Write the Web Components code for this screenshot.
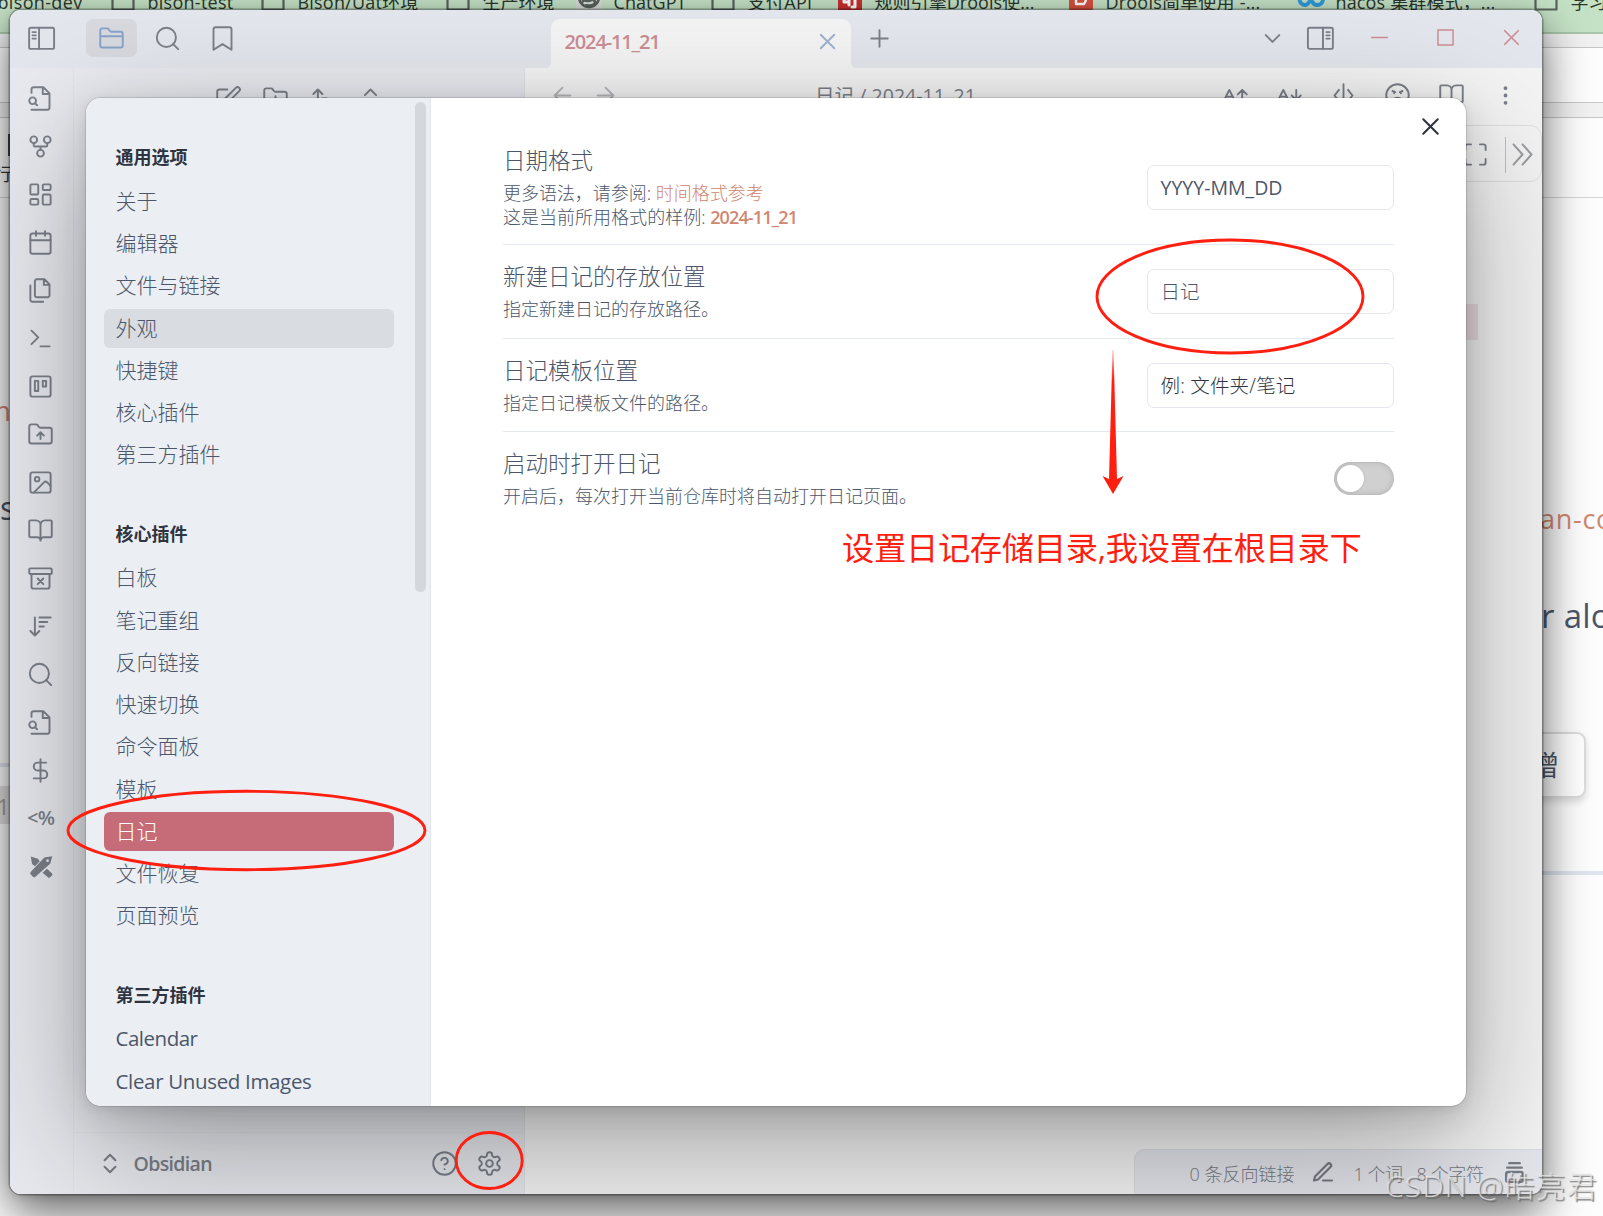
<!DOCTYPE html>
<html lang="zh-CN">
<head>
<meta charset="utf-8">
<title>Obsidian</title>
<style>
  html, body {
    margin: 0;
    width: 1603px;
    height: 1216px;
    overflow: hidden;
    background: #fff;
  }

  body {
    position: relative;
    font-family: "Open Sans", "Noto Sans CJK SC", sans-serif;
    font-size: 19.5px;
    color: #4c566a;
  }
</style>
</head>
<body>
<browser-page></browser-page>
<app-window>
  <settings-modal></settings-modal>
</app-window>
<red-marks></red-marks>

<script>
// icon shapes, drawn in a 24 unit box
const ICONS = {
  panelLeft: '<rect x="1" y="2.4" width="22.2" height="18.8" rx="1.5"/><path d="M9.8 2.4v18.8M4 6.3h3M4 9.2h3M4 12.1h3"/>',
  panelRight: '<rect x=".8" y="2.4" width="22.2" height="18.8" rx="1.5"/><path d="M14.2 2.4v18.8M17.2 6.3h3M17.2 9.2h3M17.2 12.1h3"/>',
  folder: '<path d="M4 20h16a2 2 0 0 0 2-2V8a2 2 0 0 0-2-2h-7.93a2 2 0 0 1-1.66-.9l-.82-1.2A2 2 0 0 0 7.93 3H4a2 2 0 0 0-2 2v13c0 1.1.9 2 2 2ZM2 10h20"/>',
  folderPlus: '<path d="M4 20h16a2 2 0 0 0 2-2V8a2 2 0 0 0-2-2h-7.93a2 2 0 0 1-1.66-.9l-.82-1.2A2 2 0 0 0 7.93 3H4a2 2 0 0 0-2 2v13c0 1.1.9 2 2 2ZM12 10v6M9 13h6"/>',
  folderUp: '<path d="M4 20h16a2 2 0 0 0 2-2V8a2 2 0 0 0-2-2h-7.93a2 2 0 0 1-1.66-.9l-.82-1.2A2 2 0 0 0 7.93 3H4a2 2 0 0 0-2 2v13c0 1.1.9 2 2 2ZM12 10v6M9 13l3-3 3 3"/>',
  search: '<circle cx="11" cy="11" r="8.5"/><path d="m21.500 21.500-4.500-4.500"/>',
  bookmark: '<path d="m20 22-8-5-8 5V4a2 2 0 0 1 2-2h12a2 2 0 0 1 2 2z"/>',
  fileSearch: '<path d="M4 22h14a2 2 0 0 0 2-2V7.5L14.5 2H6a2 2 0 0 0-2 2v3M14 2v6h6M9 18l-1.5-1.5"/><circle cx="5" cy="14" r="3"/>',
  graph: '<circle cx="12" cy="18" r="3"/><circle cx="6" cy="6" r="3"/><circle cx="18" cy="6" r="3"/><path d="M18 9v2c0 .6-.4 1-1 1H7c-.6 0-1-.4-1-1V9M12 12v3"/>',
  dashboard: '<rect x="3" y="3" width="7" height="9" rx="1"/><rect x="14" y="3" width="7" height="5" rx="1"/><rect x="14" y="12" width="7" height="9" rx="1"/><rect x="3" y="16" width="7" height="5" rx="1"/>',
  calendar: '<rect x="3" y="4" width="18" height="18" rx="2"/><path d="M16 2v4M8 2v4M3 10h18"/>',
  files: '<path d="M15.5 2H8.6c-.4 0-.8.2-1.1.5-.3.3-.5.7-.5 1.1v12.8c0 .4.2.8.5 1.1.3.3.7.5 1.1.5h9.8c.4 0 .8-.2 1.1-.5.3-.3.5-.7.5-1.1V6.5L15.5 2zM3 7.6v12.8c0 .4.2.8.5 1.1.3.3.7.5 1.1.5h9.8M15 2v5h5"/>',
  terminal: '<path d="m4 17 6-6-6-6M12 19h8"/>',
  kanban: '<rect x="3" y="3" width="18" height="18" rx="2"/><path d="M7 7h3v9H7zM14 7h3v5h-3z"/>',
  image: '<rect x="3" y="3" width="18" height="18" rx="2"/><circle cx="9" cy="9" r="2"/><path d="m21 15-3.09-3.09a2 2 0 0 0-2.82 0L6 21"/>',
  book: '<path d="M12 7v14M3 18a1 1 0 0 1-1-1V4a1 1 0 0 1 1-1h5a4 4 0 0 1 4 4 4 4 0 0 1 4-4h5a1 1 0 0 1 1 1v13a1 1 0 0 1-1 1h-6a3 3 0 0 0-3 3 3 3 0 0 0-3-3z"/>',
  archive: '<rect x="2" y="3" width="20" height="5" rx="1"/><path d="M4 8v11a2 2 0 0 0 2 2h12a2 2 0 0 0 2-2V8M9.5 17l5-5M9.5 12l5 5"/>',
  sortDown: '<path d="m3 16 4 4 4-4M7 20V4M11 4h10M11 8h7M11 12h4"/>',
  sortUp: '<path d="m3 8 4-4 4 4M7 4v16M11 12h4M11 16h7M11 20h10"/>',
  dollar: '<path d="M12 2v20M17 5H9.5a3.5 3.5 0 0 0 0 7h5a3.5 3.5 0 0 1 0 7H6"/>',
  pens: '<g fill="currentColor" stroke="none"><path fill-rule="evenodd" d="M22.4 2.9 15.4 4 3.3 16.9q-1 1.1 0 2.2l2 2q1.1 1 2.2 0L20.8 9.4zM18.3 5.6a1.2 1.2 0 1 1 0 2.4 1.2 1.2 0 0 1 0-2.4z"/><path d="m3.3 3 6.4 2 1.6 2.4-4.2 4.4-2.6-2.1z"/><path d="m13.8 17.6 3.9-3.6 4.6 4.3q.7.8 0 1.5l-1.9 1.9q-.8.7-1.5 0z"/></g>',
  edit: '<path d="M11 4H4a2 2 0 0 0-2 2v14a2 2 0 0 0 2 2h14a2 2 0 0 0 2-2v-7M18.5 2.5a2.12 2.12 0 0 1 3 3L12 15l-4 1 1-4Z"/>',
  upDown: '<path d="m7 15 5 5 5-5M7 9l5-5 5 5"/>',
  cross: '<path d="M18 6 6 18M6 6l12 12"/>',
  plus: '<path d="M12 4.7v14.6M4.7 12h14.6"/>',
  chevron: '<path d="m6 9 6 6 6-6"/>',
  minus: '<path d="M5 12h14"/>',
  square: '<path d="M5.3 5.3h13.4v13.4H5.3z"/>',
  arrowLeft: '<path d="m12 19-7-7 7-7M19 12H5"/>',
  arrowRight: '<path d="m12 5 7 7-7 7M5 12h14"/>',
  textUp: '<path d="M3.5 13h6M2 16l4.5-9 4.5 9M18 16V7M14 11l4-4 4 4"/>',
  textDown: '<path d="M3.5 13h6M2 16l4.5-9 4.5 9M18 7v9M14 12l4 4 4-4"/>',
  split: '<path d="M12 2v20M8 7l-4 5 4 5M16 7l4 5-4 5"/>',
  angry: '<circle cx="12" cy="12" r="10"/><path d="M7.5 8 10 9M14 9l2.5-1M9 10h.01M15 10h.01M16 16s-1.5-2-4-2-4 2-4 2"/>',
  dots: '<g fill="currentColor" stroke-width="1.4"><circle cx="12" cy="5.5" r="1"/><circle cx="12" cy="12" r="1"/><circle cx="12" cy="18.5" r="1"/></g>',
  maximize: '<path d="M8 3H5a2 2 0 0 0-2 2v3M21 8V5a2 2 0 0 0-2-2h-3M3 16v3a2 2 0 0 0 2 2h3M16 21h3a2 2 0 0 0 2-2v-3"/>',
  doubleRight: '<path d="m4 3 8 9-8 9M12 3l8 9-8 9"/>',
  help: '<circle cx="12" cy="12" r="10"/><path d="M9.09 9a3 3 0 0 1 5.83 1c0 2-3 3-3 3M12 17h.01"/>',
  gear: '<path d="M12.22 2h-.44a2 2 0 0 0-2 2v.18a2 2 0 0 1-1 1.73l-.43.25a2 2 0 0 1-2 0l-.15-.08a2 2 0 0 0-2.73.73l-.22.38a2 2 0 0 0 .73 2.73l.15.1a2 2 0 0 1 1 1.72v.51a2 2 0 0 1-1 1.74l-.15.09a2 2 0 0 0-.73 2.73l.22.38a2 2 0 0 0 2.73.73l.15-.08a2 2 0 0 1 2 0l.43.25a2 2 0 0 1 1 1.73V20a2 2 0 0 0 2 2h.44a2 2 0 0 0 2-2v-.18a2 2 0 0 1 1-1.73l.43-.25a2 2 0 0 1 2 0l.15.08a2 2 0 0 0 2.73-.73l.22-.39a2 2 0 0 0-.73-2.73l-.15-.08a2 2 0 0 1-1-1.74v-.5a2 2 0 0 1 1-1.74l.15-.09a2 2 0 0 0 .73-2.73l-.22-.38a2 2 0 0 0-2.73-.73l-.15.08a2 2 0 0 1-2 0l-.43-.25a2 2 0 0 1-1-1.73V4a2 2 0 0 0-2-2z"/><circle cx="12" cy="12" r="3"/>',
  pencil: '<path d="M12 20h9M16.5 3.5a2.12 2.12 0 0 1 3 3L7 19l-4 1 1-4Z"/>',
  stack: '<path d="M7 3h10M5 7.3h14"/><rect x="4" y="11.5" width="16" height="9.5" rx="2"/>',
  bookmarkFolder: '<path d="M1.5-2h21v22.500h-21z"/>',
  chat: '<path d="M-1-2h26v24H-1z" fill="#d9ddd9" stroke="none"/><circle cx="12" cy="8" r="10" stroke-width="2.600"/><path d="M5 4q9-2 12 6t-8 6M19 4q-2 9-10 8t-4-9M5 14q4-9 14-1"/>',
  redSite: '<path d="M0-2h24v26H0z" fill="#c9302f" stroke="none"/><path d="M6 0v13h5M11 0v16M17 0v18h-3" stroke="#fff" stroke-width="3"/>',
  redBook: '<rect y="-4" width="24" height="26" rx="3" fill="#d8503f" stroke="none"/><path d="M7-1h8q3 4-1 7 5 4 1 9H7zM7 6h7" stroke="#fff" stroke-width="2.4"/>',
  nacos: '<path d="M13 8q-3-4-6.500-4a6 6 0 1 0 0 12C11 16 13 4 18 4a6 6 0 0 1 0 12q-3 0-4.500-3" stroke="#2f9bdc" stroke-width="4"/>'
};

// shadow root shared by all elements
class BaseElement extends HTMLElement {
  constructor() {
    super();
    this.root = this.attachShadow({ mode: 'open' });
  }

  connectedCallback() {
    this.root.innerHTML = `<style>${this.constructor.styles}</style>${this.render()}`;
  }
}

class UiIcon extends BaseElement {
  static styles = `
    :host {
      display: block;
      flex: none;
      width: 27px;
      height: 27px;
    }

    svg {
      display: block;
      width: 100%;
      height: 100%;
      overflow: visible;
      fill: none;
      stroke: currentColor;
      stroke-width: var(--stroke, 1.7);
      stroke-linecap: round;
      stroke-linejoin: round;
    }
  `;

  render() {
    return `<svg viewBox="0 0 24 24">${ICONS[this.getAttribute('name')]}</svg>`;
  }
}

// one line of text, tracked so that it fills the given width
class TextRun extends BaseElement {
  static styles = `
    :host {
      display: inline-block;
      flex: none;
      white-space: nowrap;
    }

    span {
      display: inline-block;
    }
  `;

  render() {
    return '<span><slot></slot></span>';
  }

  connectedCallback() {
    super.connectedCallback();
    const width = Number(this.getAttribute('width'));
    if (!width) return;
    const span = this.root.querySelector('span');
    const natural = span.getBoundingClientRect().width;
    const count = [...this.textContent].length;
    this.style.letterSpacing = `${(width - natural) / count}px`;
  }
}

class BookmarkItem extends BaseElement {
  static styles = `
    :host {
      display: flex;
      flex: none;
      gap: 13px;
      height: 32px;
      color: #2b352d;
      font-size: 18px;
      line-height: 24px;
    }

    text-run {
      margin: -10px 0 0 -.5px;
    }

    ui-icon {
      width: 24px;
      height: 24px;
      margin-top: -11px;
      color: #59625b;
      --stroke: 2.2;
    }
  `;

  render() {
    const icon = this.getAttribute('icon');
    const width = this.getAttribute('text-width');
    return `${icon ? `<ui-icon name="${icon}"></ui-icon>` : ''}<text-run width="${width}">${this.textContent}</text-run>`;
  }
}

// the browser behind the window
class BrowserPage extends BaseElement {
  static styles = `
    :host {
      display: flex;
      flex-direction: column;
      position: absolute;
      inset: 0;
      overflow: hidden;
      background: #fdfdfd;
    }

    .bookmarks {
      display: flex;
      height: 32px;
      overflow: hidden;
      background: #c5e2c6;
    }

    .strip {
      flex: none;
      box-sizing: border-box;
      border-top: 1px solid #c6c6c6;
    }

    .strip.first {
      height: 15px;
      background: #f1f1f1;
      border-top: 2px solid #a9c5ab;
    }

    .strip.address {
      height: 55px;
    }

    .strip.gap {
      height: 15px;
      background: #f1f1f1;
    }

    .strip.tools {
      height: 81px;
      border-bottom: 1px solid #d4d4d4;
    }

    .scrap {
      position: absolute;
      white-space: nowrap;
    }

    .rule {
      height: 4px;
      background: #dfe4ee;
    }

    .card {
      box-sizing: border-box;
      width: 60px;
      height: 66px;
      border: 2px solid #dcdcdc;
      border-radius: 9px;
      background: #fff;
      box-shadow: 0 4px 7px #0002;
    }
  `;

  static bookmarks = [
    ['', 'bison-dev', 85, 113],
    ['bookmarkFolder', 'bison-test', 86, 150],
    ['bookmarkFolder', 'Bison/Uat环境', 121, 185],
    ['bookmarkFolder', '生产环境', 72, 131],
    ['chat', 'ChatGPT', 73, 134],
    ['bookmarkFolder', '支付API', 65, 127],
    ['redSite', '规则引擎Drools使...', 160, 231],
    ['redBook', 'Drools简单使用 -...', 155, 230],
    ['nacos', 'nacos 集群模式，...', 160, 235],
    ['bookmarkFolder', '学习', 36, 80]
  ];

  render() {
    const bookmarks = BrowserPage.bookmarks.map(([icon, label, textWidth, width]) =>
      `<bookmark-item icon="${icon}" text-width="${textWidth}" style="width:${width}px">${label}</bookmark-item>`).join('');
    return `
      <div class="bookmarks" style="margin-left:-2px">${bookmarks}</div>
      <div class="strip first"></div>
      <div class="strip address"></div>
      <div class="strip gap"></div>
      <div class="strip tools"></div>
      <div class="scrap" style="left:8px;top:134px;width:8px;height:22px;background:#4c4c58"></div>
      <div class="scrap" style="left:-6px;top:161px;font-size:18px;line-height:27px;color:#333">行</div>
      <div class="scrap" style="left:-15px;top:391px;font-size:28px;line-height:38px;color:#d08770">m</div>
      <div class="scrap" style="left:0;top:487px;font-size:32px;line-height:42px">s</div>
      <div class="scrap rule" style="left:0;top:763px;width:12px"></div>
      <div class="scrap" style="left:0;top:786px;width:12px;height:38px;background:#e2dfe0"></div>
      <div class="scrap" style="left:-3px;top:790px;font-size:22px;line-height:32px;color:#a39c9c">1</div>
      <div class="scrap" style="left:1540px;top:497px;font-size:27px;line-height:44px;color:#d08770"><text-run width="73">an-co</text-run></div>
      <div class="scrap" style="left:1541px;top:594px;font-size:33px;line-height:44px"><text-run width="70">r alo</text-run></div>
      <div class="scrap card" style="left:1526px;top:732px"></div>
      <div class="scrap" style="left:1531px;top:745px;font-size:28px;line-height:40px">增</div>
      <div class="scrap rule" style="left:1530px;top:871px;width:80px"></div>
    `;
  }
}

class AppWindow extends BaseElement {
  static styles = `
    :host {
      display: flex;
      flex-direction: column;
      position: absolute;
      left: 10px;
      top: 10px;
      width: 1532px;
      height: 1184px;
      border-radius: 11px;
      color: #7a7f89;
      box-shadow: 0 0 0 1.5px #00000048, 0 17px 46px #000000a0, 0 2px 8px #0002;
    }

    .frame {
      display: flex;
      flex-direction: column;
      flex: 1;
      position: relative;
      overflow: hidden;
      border-radius: 11px;
      background: #f4f4f4;
    }

    .titlebar {
      display: flex;
      align-items: center;
      flex: none;
      box-sizing: border-box;
      height: 58px;
      padding-bottom: 1.500px;
      background: #e3e6ec;
    }

    .active-button {
      display: flex;
      align-items: center;
      justify-content: center;
      width: 51px;
      height: 38px;
      margin: 0 16.5px 0 31px;
      border-radius: 7px;
      background: #d7d9de;
      color: #87a3c8;
    }

    .tab {
      display: flex;
      align-items: center;
      justify-content: space-between;
      align-self: flex-end;
      position: relative;
      box-sizing: border-box;
      width: 300px;
      height: 49px;
      margin: 0 14.5px -1.500px 315.5px;
      padding: 0 10px 4px 13.500px;
      border-radius: 9px 9px 0 0;
      background: #f4f4f4;
      color: #cb8d94;
      font-size: 20px;
      font-weight: 600;
    }

    .tab::before,
    .tab::after {
      content: '';
      position: absolute;
      bottom: 0;
      width: 6px;
      height: 6px;
    }

    .tab::before {
      right: 100%;
      background: radial-gradient(circle at 0 0, transparent 6px, #f4f4f4 6.5px);
    }

    .tab::after {
      left: 100%;
      background: radial-gradient(circle at 100% 0, transparent 6px, #f4f4f4 6.5px);
    }

    .body {
      display: flex;
      flex: 1;
    }

    .ribbon {
      display: flex;
      flex-direction: column;
      gap: 21px;
      box-sizing: border-box;
      width: 64px;
      padding: 17px 0 0 17px;
      border-right: 1px solid #e2e4e8;
      background: #e8eaef;
    }

    .code-mark {
      width: 27px;
      height: 27px;
      font-size: 20px;
      font-weight: 600;
      line-height: 26px;
    }

    .sidebar {
      display: flex;
      flex-direction: column;
      justify-content: space-between;
      width: 450px;
      background: #e8eaef;
    }

    .sidebar-tools {
      display: flex;
      padding: 17px 0 0 140.500px;
      gap: 20.500px;
    }

    .vault {
      display: flex;
      align-items: center;
      box-sizing: border-box;
      height: 62px;
      padding: 0 21px 0 22.500px;
      border-top: 1px solid #e2e4e8;
    }

    .main {
      display: flex;
      flex-direction: column;
      flex: 1;
      border-left: 1px solid #e0e1e4;
    }

    .view-header {
      display: flex;
      align-items: center;
      box-sizing: border-box;
      height: 57px;
      padding: 0 23.5px 2px 23.5px;
    }

    .view-header .title {
      margin: -2px auto 0 196.500px;
    }

    .tools {
      display: flex;
      gap: 27px;
    }

    .editor-toolbar {
      display: flex;
      align-items: center;
      justify-content: flex-end;
      box-sizing: border-box;
      height: 57px;
      border: 1px solid #dddfe3;
      border-radius: 12px;
      padding: 2px 5px 0 0;
    }

    .editor-toolbar i {
      width: 1px;
      height: 36px;
      margin: 0 3.500px 0 15.500px;
      background: #bfc0c2;
    }

    .highlight {
      align-self: flex-end;
      width: 80px;
      height: 36px;
      margin: 122px 64px 0 0;
      background: #e6dee0;
    }

    .status {
      display: flex;
      align-items: center;
      align-self: flex-end;
      box-sizing: border-box;
      width: 408px;
      height: 45px;
      margin-top: auto;
      padding: 1px 14px 0 54.500px;
      border: solid #dcdde1;
      border-width: 1px 0 0 1px;
      border-radius: 11px 0 0 0;
      background: #e5e6ec;
      color: #777b84;
      font-size: 18px;
      font-weight: 300;
    }
  `;

  static ribbon = ['fileSearch', 'graph', 'dashboard', 'calendar', 'files', 'terminal', 'kanban', 'folderUp', 'image',
    'book', 'archive', 'sortDown', 'search', 'fileSearch', 'dollar', '', 'pens'];

  render() {
    const ribbon = AppWindow.ribbon.map(name => name
      ? `<ui-icon name="${name}"></ui-icon>`
      : '<div class="code-mark"><text-run width="27.5">&lt;%</text-run></div>').join('');
    return `
      <div class="frame">
        <div class="titlebar">
          <ui-icon name="panelLeft" style="margin-left:18px"></ui-icon>
          <div class="active-button"><ui-icon name="folder"></ui-icon></div>
          <ui-icon name="search"></ui-icon>
          <ui-icon name="bookmark" style="margin-left:28px"></ui-icon>
          <div class="tab">
            <text-run width="95">2024-11_21</text-run>
            <ui-icon name="cross" style="color:#9db2cb"></ui-icon>
          </div>
          <ui-icon name="plus"></ui-icon>
          <ui-icon name="chevron" style="margin-left:auto"></ui-icon>
          <ui-icon name="panelRight" style="margin-left:21px"></ui-icon>
          <ui-icon name="minus" style="margin-left:31.5px;margin-top:-1px;color:#cd8d92;--stroke:1.3"></ui-icon>
          <ui-icon name="square" style="margin-left:39px;margin-top:-2px;color:#cd8d92;--stroke:1.3"></ui-icon>
          <ui-icon name="cross" style="margin:-2px 17.5px 0 39px;color:#cd8d92;--stroke:1.5"></ui-icon>
        </div>
        <div class="body">
          <div class="ribbon">${ribbon}</div>
          <div class="sidebar">
            <div class="sidebar-tools">
              <ui-icon name="edit"></ui-icon>
              <ui-icon name="folderPlus"></ui-icon>
              <ui-icon name="sortUp"></ui-icon>
              <ui-icon name="upDown"></ui-icon>
            </div>
            <div class="vault">
              <ui-icon name="upDown" style="--stroke:1.9;width:26px"></ui-icon>
              <text-run width="78.5" style="margin-left:11px;margin-right:auto;font-weight:600">Obsidian</text-run>
              <ui-icon name="help"></ui-icon>
              <ui-icon name="gear" style="margin-left:18.5px"></ui-icon>
            </div>
          </div>
          <div class="main">
            <div class="view-header">
              <ui-icon name="arrowLeft" style="color:#b5b6ba"></ui-icon>
              <ui-icon name="arrowRight" style="margin-left:16px;color:#b5b6ba"></ui-icon>
              <text-run class="title" width="161">日记 / 2024-11_21</text-run>
              <div class="tools">
                <ui-icon name="textUp"></ui-icon>
                <ui-icon name="textDown"></ui-icon>
                <ui-icon name="split"></ui-icon>
                <ui-icon name="angry"></ui-icon>
                <ui-icon name="book"></ui-icon>
                <ui-icon name="dots"></ui-icon>
              </div>
            </div>
            <div class="editor-toolbar">
              <ui-icon name="maximize"></ui-icon>
              <i></i>
              <ui-icon name="doubleRight" style="color:#999b9f"></ui-icon>
            </div>
            <div class="highlight"></div>
            <div class="status">
              <text-run width="105">0 条反向链接</text-run>
              <ui-icon name="pencil" style="margin-left:16px;width:24px;--stroke:2.2"></ui-icon>
              <text-run width="49" style="margin-left:19px">1 个词</text-run>
              <text-run width="67" style="margin-left:14px">8 个字符</text-run>
              <ui-icon name="stack" style="margin-left:18px;width:25px;height:25px;--stroke:2.3"></ui-icon>
            </div>
          </div>
        </div>
        <slot></slot>
      </div>
    `;
  }
}

class NavSection extends BaseElement {
  static styles = `
    :host {
      display: flex;
      flex-direction: column;
      gap: 3px;
      margin-bottom: 45.9px;
    }

    h3 {
      margin: 0 0 7.9px 11.500px;
      color: #2e3440;
      font-size: 18px;
      font-weight: 600;
      line-height: 27px;
    }

    .item {
      height: 39.25px;
      padding-left: 11.500px;
      border-radius: 6px;
      font-size: 21px;
      font-weight: 300;
      line-height: 39px;
    }

    .item.latin {
      font-weight: 400;
      font-size: 20.500px;
      line-height: 38px;
    }

    .item.hover {
      background: #d9dce1;
    }

    .item.active {
      background: #c56c78;
      color: #fff;
    }
  `;

  render() {
    const items = this.getAttribute('items').split(',').map(item => {
      const [label, state = '', width = ''] = item.split(':');
      return `<div class="item ${state}"><text-run width="${width}">${label}</text-run></div>`;
    }).join('');
    return `<h3><slot></slot></h3>${items}`;
  }
}

class SettingRow extends BaseElement {
  static styles = `
    :host {
      display: flex;
      align-items: center;
      justify-content: space-between;
      padding: 17px 0 16.500px;
      border-bottom: 1px solid #e4e8f0;
    }

    :host([first]) {
      padding-top: 0;
      padding-bottom: 15.700px;
    }

    :host([last]) {
      border-bottom: 0;
    }

    .name {
      margin-bottom: 5px;
      font-size: 22.5px;
      font-weight: 300;
      line-height: 30px;
    }

    :host([first]) .name {
      margin-bottom: 4.500px;
    }

    .desc {
      font-size: 18px;
      font-weight: 300;
      line-height: 24px;
    }

    /* runs must not push the line box past its height */
    ::slotted(text-run) {
      height: 24px;
      vertical-align: top;
    }
  `;

  render() {
    return `
      <div>
        <div class="name">${this.getAttribute('name')}</div>
        <div class="desc"><slot></slot></div>
      </div>
      <slot name="control"></slot>
    `;
  }
}

class TextField extends BaseElement {
  static styles = `
    :host {
      display: block;
      box-sizing: border-box;
      width: 247px;
      height: 45px;
      padding-left: 12.500px;
      border: 1px solid #e4e7f0;
      border-radius: 7px;
      font-size: 19.5px;
      font-weight: 300;
      line-height: 43px;
    }
  `;

  render() {
    return '<slot></slot>';
  }
}

class ToggleSwitch extends BaseElement {
  static styles = `
    :host {
      display: block;
      box-sizing: border-box;
      width: 60px;
      height: 33px;
      margin-top: -1px;
      padding: 3px;
      border-radius: 17px;
      background: #d0d0d0;
      box-shadow: inset 0 0 6px #00000026, inset 0 0 0 1px #00000008;
    }

    i {
      display: block;
      width: 27px;
      height: 27px;
      border-radius: 50%;
      background: #fff;
      box-shadow: 0 0 3px #0002;
    }
  `;

  render() {
    return '<i></i>';
  }
}

class SettingsModal extends BaseElement {
  static styles = `
    :host {
      display: flex;
      position: absolute;
      left: 76px;
      top: 88px;
      width: 1380px;
      height: 1008px;
      border-radius: 15px;
      background: #fff;
      color: #4c566a;
      box-shadow: 0 0 0 1px #0000001c, 0 2.7px 11px #00000012, 0 9.5px 37px #00000020, 0 45px 135px #00000054;
    }

    nav {
      display: flex;
      box-sizing: border-box;
      width: 345px;
      padding: 4px 4px 0 18px;
      border-right: 1px solid #e2e5ec;
      border-radius: 15px 0 0 15px;
      overflow: hidden;
      background: #ebeff4;
    }

    .sections {
      width: 290px;
      padding-top: 42px;
    }

    .scrollbar {
      width: 11px;
      height: 490px;
      margin-left: auto;
      border-radius: 6px;
      background: #d4d7dc;
    }

    main {
      flex: 1;
      padding: 48px 72px 0;
    }

    .close {
      position: absolute;
      top: 14px;
      right: 21.5px;
      width: 29px;
      height: 29px;
      color: #2e3440;
    }

    .link {
      color: #d08770;
    }

    .sample {
      color: #d08770;
      font-weight: 600;
    }
  `;

  render() {
    return `
      <nav>
        <div class="sections">
          <nav-section items="关于,编辑器,文件与链接,外观:hover,快捷键,核心插件,第三方插件">通用选项</nav-section>
          <nav-section items="白板,笔记重组,反向链接,快速切换,命令面板,模板,日记:active,文件恢复,页面预览">核心插件</nav-section>
          <nav-section items="Calendar:latin:82,Clear Unused Images:latin:196">第三方插件</nav-section>
        </div>
        <div class="scrollbar"></div>
      </nav>
      <main>
        <setting-row first name="日期格式">
          <text-run width="148">更多语法，请参阅:</text-run> <text-run class="link">时间格式参考</text-run><br>
          <text-run width="202.500">这是当前所用格式的样例:</text-run> <text-run class="sample" width="87">2024-11_21</text-run>
          <text-field slot="control"><text-run width="122" style="font-weight:400">YYYY-MM_DD</text-run></text-field>
        </setting-row>
        <setting-row name="新建日记的存放位置">
          指定新建日记的存放路径。
          <text-field slot="control">日记</text-field>
        </setting-row>
        <setting-row name="日记模板位置">
          指定日记模板文件的路径。
          <text-field slot="control" style="color:#2e3440"><text-run width="135">例: 文件夹/笔记</text-run></text-field>
        </setting-row>
        <setting-row last name="启动时打开日记">
          开启后，每次打开当前仓库时将自动打开日记页面。
          <toggle-switch slot="control"></toggle-switch>
        </setting-row>
      </main>
      <ui-icon class="close" name="cross"></ui-icon>
    `;
  }
}

// hand-drawn marks and the watermark, above everything
class RedMarks extends BaseElement {
  static styles = `
    :host {
      display: block;
      position: absolute;
      inset: 0;
      overflow: hidden;
    }

    svg {
      display: block;
    }

    .note {
      position: absolute;
      left: 842px;
      top: 522.500px;
      color: #ff1f10;
      font-size: 32.300px;
      line-height: 48px;
    }

    .watermark {
      position: absolute;
      left: 1385px;
      top: 1162px;
      color: #e2e2e2d0;
      font-size: 30px;
      font-weight: 300;
      line-height: 48px;
      text-shadow: 1.5px 1.5px 1px #666c;
    }
  `;

  render() {
    return `
      <svg width="1603" height="1216" fill="none" stroke="#ff1f10" stroke-width="2.9">
        <defs>
          <linearGradient id="tail" x1="0" y1="350" x2="0" y2="380" gradientUnits="userSpaceOnUse">
            <stop stop-color="#ff1f10" stop-opacity=".3"/>
            <stop offset="1" stop-color="#ff1f10"/>
          </linearGradient>
        </defs>
        <ellipse cx="1230" cy="296.500" rx="133" ry="56.500"/>
        <ellipse cx="246.500" cy="830.500" rx="178.500" ry="39.200"/>
        <ellipse cx="489.200" cy="1160.500" rx="33" ry="28"/>
        <path d="M1112.500 350h1L1117 479l6.500-3-10.500 18-10.500-18 6.500 3z" fill="url(#tail)" stroke="none"/>
      </svg>
      <text-run class="note" width="519.500">设置日记存储目录,我设置在根目录下</text-run>
      <text-run class="watermark" width="213">CSDN @皓亮君</text-run>
    `;
  }
}

customElements.define('ui-icon', UiIcon);
customElements.define('browser-page', BrowserPage);
customElements.define('bookmark-item', BookmarkItem);
customElements.define('app-window', AppWindow);
customElements.define('settings-modal', SettingsModal);
customElements.define('nav-section', NavSection);
customElements.define('setting-row', SettingRow);
customElements.define('text-field', TextField);
customElements.define('toggle-switch', ToggleSwitch);
customElements.define('red-marks', RedMarks);
// last, so that every run is measured in its final font
customElements.define('text-run', TextRun);
</script>
</body>
</html>
